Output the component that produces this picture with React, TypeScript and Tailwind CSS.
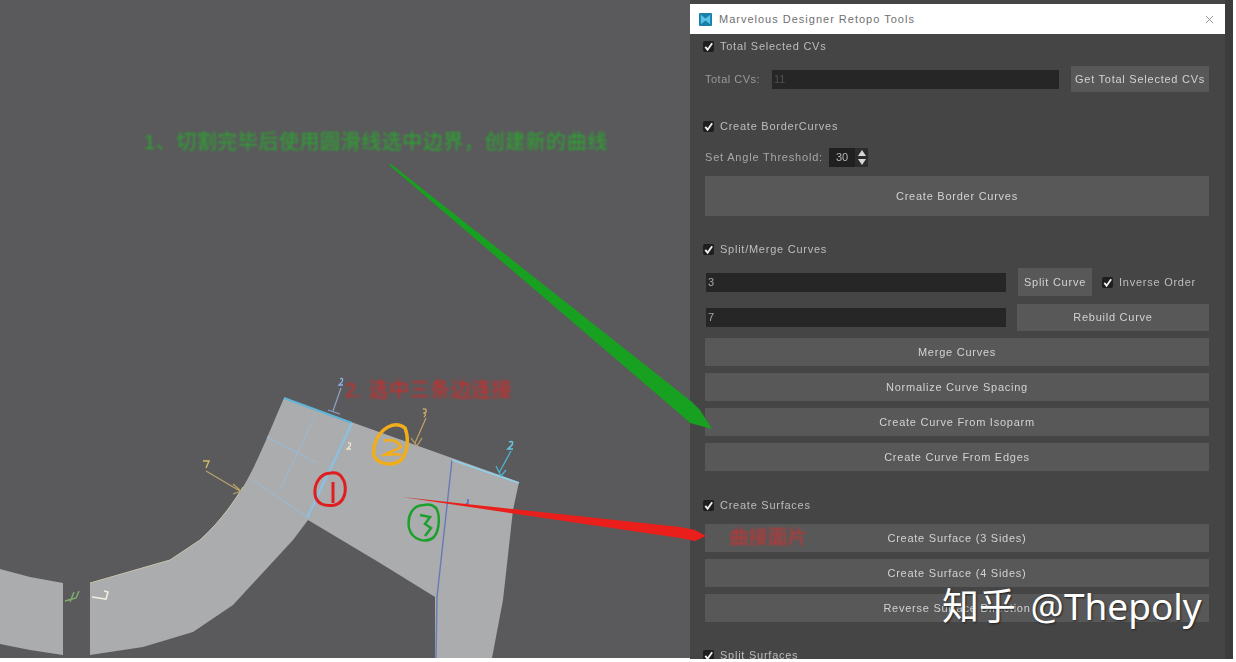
import React from 'react';

const ActionButton = ({ label, className = '' }: { label: string; className?: string }) => (
  <div className={`flex items-center justify-center bg-[#585858] text-[11px] tracking-[0.75px] text-[#d2d2d2] ${className}`}>
    {label}
  </div>
);

const Check = ({ label, className = '' }: { label: string; className?: string }) => (
  <div className={`flex h-[16px] items-center gap-[6px] text-[11px] tracking-[0.75px] text-[#bdbdbd] ${className}`}>
    <span className="flex h-[11px] w-[11px] items-center justify-center rounded-[2px] bg-[#1e1e1e]">
      <svg viewBox="0 0 12 12" className="h-[11px] w-[11px]">
        <path d="M2.5 6.5 L5 9.5 L10 2.5" fill="none" stroke="#f2f2f2" strokeWidth="2" />
      </svg>
    </span>
    {label}
  </div>
);

const Field = ({ value, dim, className = '' }: { value: string; dim?: boolean; className?: string }) => (
  <div className={`flex h-[19px] items-center bg-[#262626] px-[2px] text-[11px] ${dim ? 'text-[#505050]' : 'text-[#a8a8a8]'} ${className}`}>
    {value}
  </div>
);

const Scene = () => (
  <svg viewBox="0 0 690 658" className="h-full w-full overflow-visible">
    {/* mesh */}
    <path
      d="M284 398 L519 482 L513 510 L503 600 L492 658 L435 658 L435 597 L380 563 L308 520 L293 540 L233 605 L193 632 L143 647 L90 655 L90 583 L170 560 L200 540 C222 520 235 500 243 487 C258 462 270 430 284 398 Z"
      fill="#abacae"
    />
    <path d="M0 569 L30 577 L63 583 L63 655 L30 650 L0 644 Z" fill="#abacae" />
    <path d="M90 583 L170 560 L200 540 C222 520 235 500 243 487" fill="none" stroke="#c8c6b0" strokeWidth="1" />
    {/* seams */}
    <path d="M284 398 L352 423" stroke="#5fb4d8" strokeWidth="2" fill="none" />
    <path d="M352 423 L307 518" stroke="#8cc0e0" strokeWidth="2.5" fill="none" />
    <path d="M313 420 L280 490 M267 437 L317 463 M253 480 L307 517" stroke="#9fb6c8" strokeWidth="1.5" fill="none" />
    <path d="M452 460 L437 597 L436 658" stroke="#6a7ab8" strokeWidth="1.4" fill="none" />
    <path d="M452 460 L519 483" stroke="#8fd0e8" strokeWidth="1.5" fill="none" />
    {/* dimension arrows */}
    <path d="M341 388 L333 411 M328 410 L340 414" stroke="#8fa2c8" strokeWidth="1.2" fill="none" />
    <path d="M340 379 q4 -2 2 3 l-3 3 h4" stroke="#8fb0e8" strokeWidth="1.3" fill="none" />
    <path d="M426 418 L415 443 M411 438 L417 446 L422 438" stroke="#c2a368" strokeWidth="1.2" fill="none" />
    <path d="M423 409 q4 -1 3 3 l-2 1 q3 1 0 4" stroke="#d9b06c" strokeWidth="1.3" fill="none" />
    <path d="M511 451 L499 473 M496 466 L501 476 L506 470" stroke="#4fb3cf" strokeWidth="1.3" fill="none" />
    <path d="M509 442 q5 -2 3 3 l-4 4 h5" stroke="#67c4e0" strokeWidth="1.6" fill="none" />
    <path d="M206 471 L240 491 M233 484 L241 491 L233 494" stroke="#b8a36c" strokeWidth="1.2" fill="none" />
    <path d="M203 461 h6 l-3 7" stroke="#d2bd66" strokeWidth="1.4" fill="none" />
    <path d="M348 443 q4 -1 2 3 l-3 3 h4" stroke="#ece7c8" strokeWidth="1.3" fill="none" />
    <path d="M65 601 L76 598 L79 591 M74 592 L70 602" stroke="#7fb06a" strokeWidth="1.4" fill="none" />
    <path d="M92 597 L106 599 L108 592 L104 591" stroke="#f0eedc" strokeWidth="1.6" fill="none" />
    <path d="M468 499 v4 l-2 1" stroke="#4a62c4" strokeWidth="1.3" fill="none" />
    {/* hand drawn circles */}
    <path
      d="M331 473 C320 473 314 484 315 494 C316 504 325 507 335 505 C345 502 347 490 344 481 C341 474 336 472 331 473 Z"
      fill="none"
      stroke="#df1f1f"
      strokeWidth="3"
    />
    <path d="M333 482 L333 503" stroke="#df1f1f" strokeWidth="3" fill="none" />
    <path
      d="M388 427 C377 433 372 447 374 456 C378 464 392 467 401 460 C408 452 409 438 405 428 C400 424 394 424 388 427 Z"
      fill="none"
      stroke="#f0ad1c"
      strokeWidth="3.5"
    />
    <path d="M384 441 C392 438 399 442 401 447 C396 450 389 452 384 455 C390 455 396 453 401 455" fill="none" stroke="#f0ad1c" strokeWidth="2.5" />
    <path
      d="M424 505 C413 505 407 515 409 528 C412 540 426 544 434 537 C440 530 440 514 436 508 C433 505 428 504 424 505 Z"
      fill="none"
      stroke="#1ca02c"
      strokeWidth="2.5"
    />
    <path d="M420 515 L430 517 L425 524 L431 528 L425 536" fill="none" stroke="#1ca02c" strokeWidth="2.5" />
    {/* tapered arrows, the heads run over the panel */}
    <path d="M389 165 L391 164 L692 402 L700 410 L712 429 L690 423 L680 414 Z" fill="#18a020" />
    <path d="M402 497 L680 527 L695 530 L706 536 L695 541 L680 538 Z" fill="#ea1f1b" />
  </svg>
);

export default function App() {
  return (
    <div className="flex h-[662px] w-[1236px] overflow-hidden bg-white font-['Liberation_Sans','Noto_Sans_CJK_SC',sans-serif]">
      <div className="relative z-10 flex h-[658px] w-[690px] shrink-0 bg-[#5a5a5c]">
        <Scene />
        {/* annotations sit over the viewport */}
        <p className="absolute left-[144px] top-[130px] whitespace-nowrap text-[20px] leading-[24px] tracking-[0.55px] text-[#2aa82e] blur-[0.8px]">
          1、切割完毕后使用圆滑线选中边界，创建新的曲线
        </p>
        <p className="absolute left-[345px] top-[378px] whitespace-nowrap text-[20px] leading-[24px] tracking-[0.5px] text-[#d42a2a] blur-[0.8px]">
          2. 选中三条边连接
        </p>
      </div>

      <div className="relative flex h-[659px] w-[543px] shrink-0 flex-col overflow-hidden border-r-[8px] border-[#3c3c3c] bg-[#454545]">
        <div className="mt-[4px] flex h-[30px] shrink-0 items-center bg-white pl-[9px] pr-[11px] text-[11px] tracking-[1px] text-[#6f6f6f]">
          <svg viewBox="0 0 14 14" className="mr-[7px] h-[13px] w-[13px]">
            <rect width="14" height="14" rx="1" fill="#1a7fa8" />
            <path d="M2 2 L7 6 L12 2 V12 L7 8 L2 12 Z" fill="#57c3e6" />
          </svg>
          Marvelous Designer Retopo Tools
          <svg viewBox="0 0 10 10" className="ml-auto h-[9px] w-[9px]">
            <path d="M1 1 L9 9 M9 1 L1 9" stroke="#8a8a8a" strokeWidth="1" />
          </svg>
        </div>

        <div className="flex flex-col pl-[15px] pr-[16px] blur-[0.35px]">
          <Check label="Total Selected CVs" className="-ml-[2px] mt-[4px]" />
          <div className="mt-[12px] flex h-[26px] items-center">
            <span className="w-[67px] text-[11px] tracking-[0.5px] text-[#9a9a9a]">Total CVs:</span>
            <Field value="11" dim className="w-[287px]" />
            <ActionButton label="Get Total Selected CVs" className="ml-[12px] h-[26px] flex-1" />
          </div>

          <Check label="Create BorderCurves" className="-ml-[2px] mt-[26px]" />
          <div className="mt-[13px] flex h-[20px] items-center">
            <span className="w-[124px] text-[11px] tracking-[0.8px] text-[#a8a8a8]">Set Angle Threshold:</span>
            <span className="flex h-[19px] w-[26px] items-center justify-center bg-[#202020] text-[11px] text-[#b5b5b5]">30</span>
            <span className="flex h-[19px] w-[13px] flex-col items-center justify-between bg-[#2c2c2c] py-[2px]">
              <span className="h-0 w-0 border-x-[4px] border-b-[6px] border-x-transparent border-b-[#d8d8d8]" />
              <span className="h-0 w-0 border-x-[4px] border-t-[6px] border-x-transparent border-t-[#d8d8d8]" />
            </span>
          </div>
          <ActionButton label="Create Border Curves" className="mt-[9px] h-[40px]" />

          <Check label="Split/Merge Curves" className="-ml-[2px] mt-[25px]" />
          <div className="mt-[11px] flex h-[28px] items-center">
            <Field value="3" className="ml-[1px] w-[300px]" />
            <ActionButton label="Split Curve" className="ml-[12px] h-[28px] w-[74px]" />
            <Check label="Inverse Order" className="ml-[10px] text-[#a5a5a5]" />
          </div>
          <div className="mt-[8px] flex h-[27px] items-center">
            <Field value="7" className="ml-[1px] w-[300px]" />
            <ActionButton label="Rebuild Curve" className="ml-[11px] h-[27px] flex-1" />
          </div>
          <div className="mt-[7px] flex flex-col gap-[7px]">
            <ActionButton label="Merge Curves" className="h-[28px]" />
            <ActionButton label="Normalize Curve Spacing" className="h-[28px]" />
            <ActionButton label="Create Curve From Isoparm" className="h-[28px]" />
            <ActionButton label="Create Curve From Edges" className="h-[28px]" />
          </div>

          <Check label="Create Surfaces" className="-ml-[2px] mt-[26px]" />
          <div className="mt-[11px] flex flex-col gap-[7px]">
            <ActionButton label="Create Surface (3 Sides)" className="h-[28px]" />
            <ActionButton label="Create Surface (4 Sides)" className="h-[28px]" />
            <ActionButton label="Reverse Surface Direction" className="h-[28px]" />
          </div>
          <Check label="Split Surfaces" className="-ml-[2px] mt-[25px]" />
        </div>

        {/* overlays: red note on the button, zhihu watermark */}
        <p className="absolute left-[39px] top-[525px] text-[19.5px] leading-[24px] text-[#c93232] blur-[0.8px]">曲接面片</p>
        <p className="absolute left-[252px] top-[583px] whitespace-nowrap font-['Noto_Sans','Noto_Sans_CJK_SC',sans-serif] text-[37px] leading-[46px] text-white [word-spacing:5px] [text-shadow:1px_1px_2px_#222222]">
          知乎 @Thepoly
        </p>
      </div>
    </div>
  );
}
